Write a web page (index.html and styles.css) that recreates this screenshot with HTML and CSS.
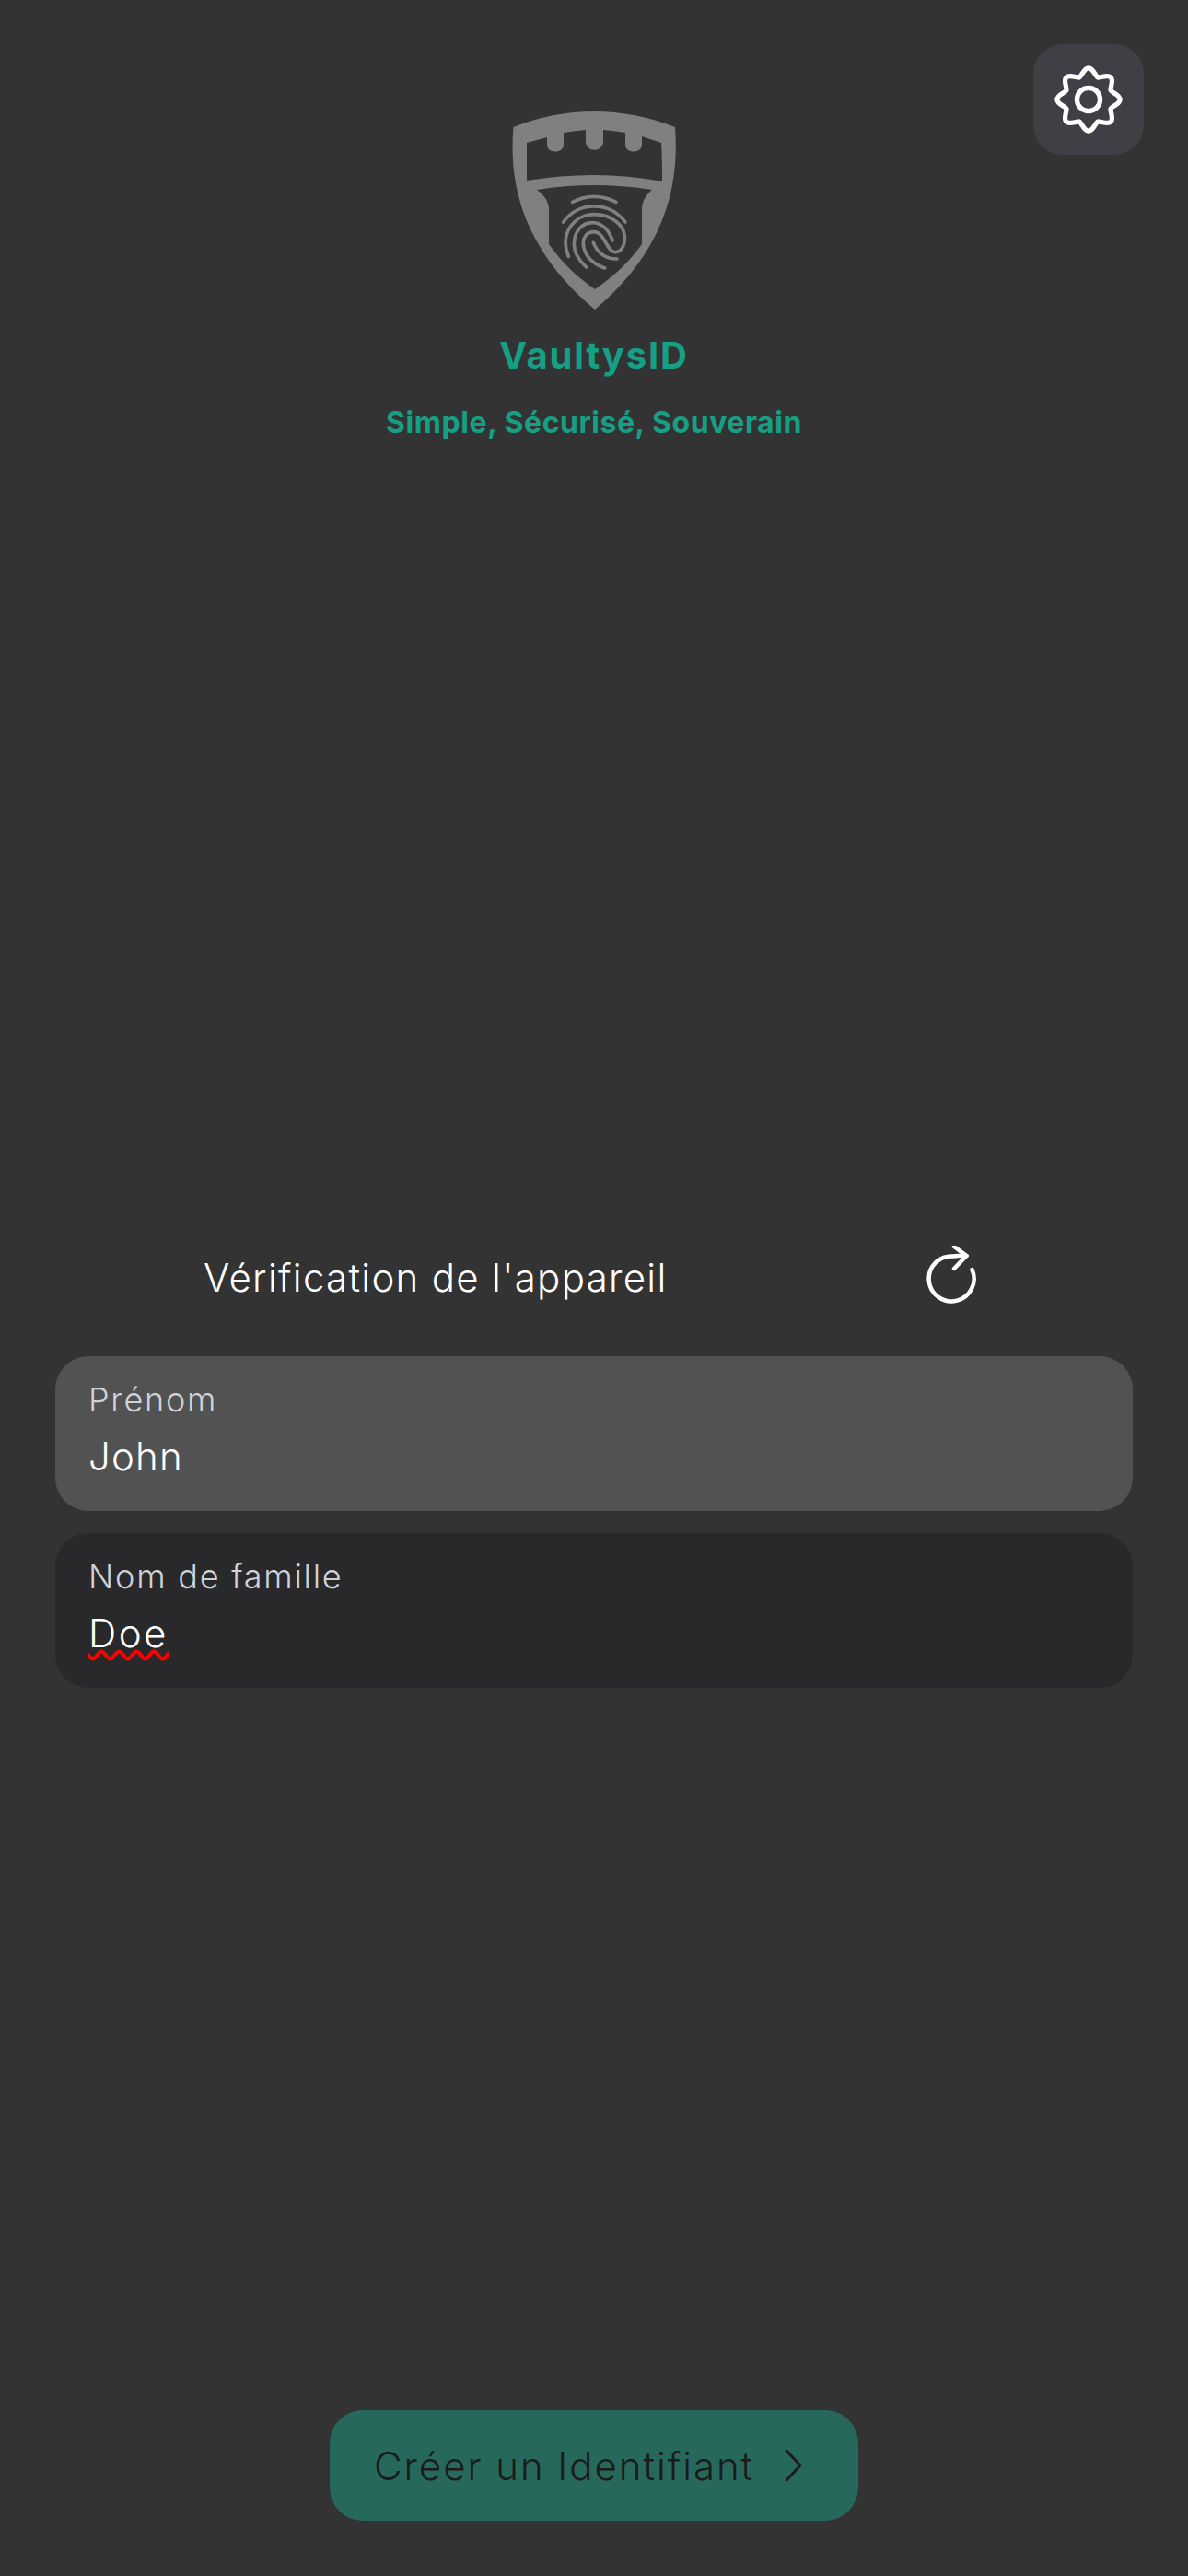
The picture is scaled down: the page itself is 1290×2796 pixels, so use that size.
FILE: index.html
```html
<!DOCTYPE html>
<html lang="fr">
<head>
    <meta charset="UTF-8">
    <meta name="viewport" content="width=device-width, initial-scale=1.0">
    <title>VaultysID</title>
    <link rel="stylesheet" href="styles.css">
</head>
<body>
<div class="page">
    <header class="top">
        <div class="brand">
            <svg class="logo" viewBox="0 0 180 216" aria-hidden="true">
                <path class="shield" fill-rule="evenodd" d="M2.5 17Q45 0 90 0T178 17C181 60 180 140 91 215C1 140-1 60 2.5 17ZM17 34L39 28V36C39 46 57 46 57 36V23Q69 21 81 20V32C81 45 100 45 100 32V20Q112 21 124 23V36C124 46 142 46 142 36V27L163 34C164 48 164 62 164 76Q127 69 90 69T17 75C17 62 17 48 17 34ZM28 85Q59 80 90 80T153 85C146 91 142 98 142 106V144C127 165 110 180 91 193C72 180 56 165 41 144V106C41 98 36 91 28 85Z"/>
                <g class="print" transform="translate(35 74) scale(0.3333)">
                    <path d="M95 73Q165 37 237 73"/>
                    <path d="M65 138C115 70 215 70 267 138"/>
                    <path d="M82 250C50 170 105 113 165 113C225 113 265 150 265 190C265 220 250 238 232 236C205 232 200 170 165 170C140 170 130 190 130 205C130 245 160 275 200 288"/>
                    <path d="M225 198C215 165 190 140 160 140C125 140 100 170 100 210C100 240 118 265 140 285"/>
                    <path d="M163 205C175 235 200 258 240 258"/>
                </g>
            </svg>
            <h1 class="brand-name">VaultysID</h1>
            <p class="brand-tag">Simple, Sécurisé, Souverain</p>
        </div>
        <button class="gear-btn" aria-label="Réglages">
            <svg class="gear" viewBox="-40 -40 80 80" aria-hidden="true">
                <defs>
                    <path id="lobe" d="M-9.57-23.1C-6.8-24.25-5-32.5 0-32.5S6.8-24.25 9.57-23.1"/>
                </defs>
                <use href="#lobe"/>
                <use href="#lobe" transform="rotate(45)"/>
                <use href="#lobe" transform="rotate(90)"/>
                <use href="#lobe" transform="rotate(135)"/>
                <use href="#lobe" transform="rotate(180)"/>
                <use href="#lobe" transform="rotate(225)"/>
                <use href="#lobe" transform="rotate(270)"/>
                <use href="#lobe" transform="rotate(315)"/>
                <circle r="12"/>
            </svg>
        </button>
    </header>

    <div class="device">
        <span class="device-text">Vérification de l'appareil</span>
        <svg class="refresh" viewBox="0 0 60 70" aria-hidden="true">
            <path d="M50.5 26A24.5 24.5 0 1 1 30 11.5Q38 10.5 44.5 11"/>
            <path d="M31 1L44.5 11L31 25"/>
        </svg>
    </div>

    <form class="fields">
        <div class="field field-active">
            <label class="field-label">Prénom</label>
            <div class="field-value">John</div>
        </div>
        <div class="field">
            <label class="field-label">Nom de famille</label>
            <div class="field-value"><span class="misspelled">Doe</span></div>
        </div>
    </form>

    <div class="bottom">
        <button class="create-btn">
            <span>Créer un Identifiant</span>
            <svg class="chevron" viewBox="0 0 20 36" aria-hidden="true">
                <path d="M2 2L17 18L2 34"/>
            </svg>
        </button>
    </div>
</div>
</body>
</html>
```

FILE: styles.css
```css
* {
    box-sizing: border-box;
}
html, body {
    margin: 0;
    padding: 0;
    background: #333333;
}
body {
    font-family: Inter, "Noto Sans", sans-serif;
    color: #ffffff;
}
.page {
    height: 2796px;
    display: flex;
    flex-direction: column;
}

/* header */
.top {
    display: grid;
    grid-template-columns: 1fr auto 1fr;
    align-items: start;
    padding: 48px 48px 0 48px;
}
.brand {
    grid-column: 2;
    display: flex;
    flex-direction: column;
    align-items: center;
    padding-top: 73px;
}
.logo {
    width: 180px;
    height: 216px;
    display: block;
}
.shield {
    fill: #808080;
}
.print path {
    fill: none;
    stroke: #808080;
    stroke-width: 11;
    stroke-linecap: round;
}
.brand-name {
    margin: 25px 0 0 0;
    font-size: 40px;
    line-height: 48px;
    font-weight: 700;
    letter-spacing: 1.8px;
    color: #15a085;
}
.brand-tag {
    margin: 29px 0 0 0;
    font-size: 32px;
    line-height: 40px;
    font-weight: 700;
    letter-spacing: 0.55px;
    color: #15a085;
}
.gear-btn {
    grid-column: 3;
    justify-self: end;
    width: 120px;
    height: 120px;
    border: none;
    border-radius: 32px;
    background: #3f4045;
    padding: 0;
    display: flex;
    align-items: center;
    justify-content: center;
}
.gear {
    width: 84px;
    height: 84px;
}
.gear path, .gear circle, .gear use {
    fill: none;
    stroke: #ffffff;
    stroke-width: 5;
    stroke-linecap: round;
}

/* device check */
.device {
    margin-top: 873px;
    padding: 0 225px 0 221px;
    display: flex;
    align-items: center;
    justify-content: space-between;
}
.device-text {
    font-size: 42px;
    font-weight: 300;
    line-height: 60px;
    letter-spacing: 1.3px;
}
.refresh {
    width: 60px;
    height: 70px;
}
.refresh path {
    fill: none;
    stroke: #ffffff;
    stroke-width: 4.5;
    stroke-linecap: round;
    stroke-linejoin: round;
}

/* fields */
.fields {
    margin: 50px 60px 0 60px;
    display: flex;
    flex-direction: column;
    gap: 24px;
}
.field {
    height: 168px;
    border-radius: 36px;
    background: #29292b;
    padding: 22px 36px;
}
.field-active {
    background: #525252;
}
.field-label {
    display: block;
    font-size: 36px;
    line-height: 50px;
    font-weight: 300;
    letter-spacing: 1.75px;
    color: #cfd2d9;
}
.field-value {
    margin-top: 10px;
    font-size: 42px;
    line-height: 54px;
    font-weight: 300;
    letter-spacing: 1.2px;
}
.misspelled {
    letter-spacing: 2.5px;
    text-decoration: underline wavy #ff0000 4px;
    text-underline-offset: 3px;
}

/* bottom button */
.bottom {
    margin-top: auto;
    padding-bottom: 60px;
    display: flex;
    justify-content: center;
}
.create-btn {
    width: 574px;
    height: 120px;
    border: none;
    border-radius: 36px;
    background: #26695c;
    color: #1b1b1b;
    font-family: inherit;
    font-size: 42px;
    font-weight: 300;
    letter-spacing: 1.95px;
    padding: 0 60px 0 48px;
    display: flex;
    align-items: center;
    justify-content: space-between;
}
.chevron {
    width: 20px;
    height: 36px;
}
.chevron path {
    fill: none;
    stroke: #1b1b1b;
    stroke-width: 3;
    stroke-linecap: round;
    stroke-linejoin: round;
}
```
